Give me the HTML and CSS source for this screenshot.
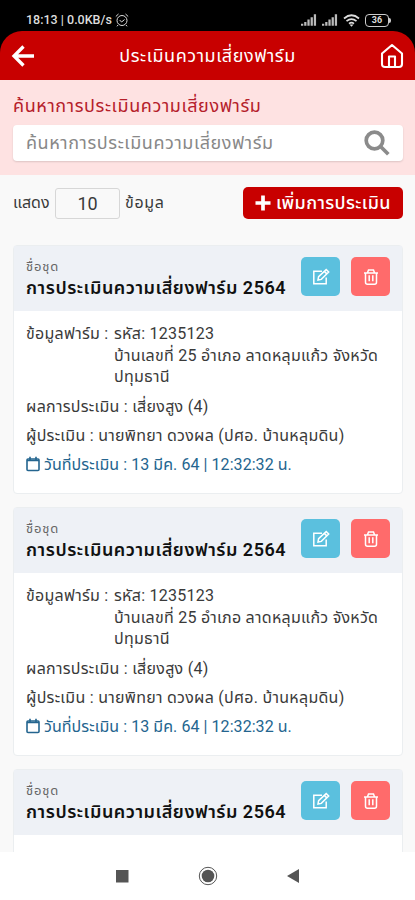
FILE: index.html
```html
<!DOCTYPE html>
<html lang="th">
<head>
<meta charset="utf-8">
<meta name="viewport" content="width=device-width">
<title>ประเมินความเสี่ยงฟาร์ม</title>
<link rel="stylesheet" href="styles.css">
</head>
<body>
<svg class="symbols" aria-hidden="true">
  <symbol id="edit" viewBox="0 0 18 18"><path d="M10 3.200H1.800v12.500h12.400V9.500" /><path d="M6 12l.6-3.300L14.200 1.600l2.500 2.400-7.400 7.400zM12.300 3.400l2.500 2.500" /></symbol>
  <symbol id="trash" viewBox="0 0 18 18"><path d="M2 5h14M5.500 4.700l1-2.700h5l1 2.700M3.500 5v9.200q0 2 2 2h7q2 0 2-2V5M7.200 7.300v6M10.800 7.300v6" /></symbol>
  <symbol id="calendar" viewBox="0 0 14 16"><rect x="1" y="3" width="12" height="11.5" rx="1" /><path d="M1 4.500h12M4 .8V4M10 .8V4" /></symbol>
  <symbol id="signal" viewBox="0 0 17 12"><path d="M0 10h2.400v2H0zM3.400 8h2.400v4H3.400zM6.800 5.500h2.400V12H6.800zM10.200 3h2.400v9h-2.400zM13.600 0H16v12h-2.400z" /></symbol>
</svg>
<div class="phone">
  <div class="status">
    <span class="clock">18:13 | 0.0KB/s</span>
    <svg class="alarm" viewBox="0 0 14 14"><circle cx="7" cy="7.500" r="5" /><path d="M.8 3.500L3.500 1M13.200 3.500L10.500 1M4.600 7l2 2 3-2.500M3 12l-1 1.300M11 12l1 1.300" /></svg>
    <div class="indicators">
      <svg class="signal"><use href="#signal" /></svg>
      <svg class="signal"><use href="#signal" /></svg>
      <svg class="wifi" viewBox="0 0 17 13"><path d="M1 4.500q7.500-6.500 15 0M3.500 7.200q5-4.300 10 0M6 9.700q2.500-2 5 0" /><path class="dot" d="M6.500 10.500h4l-2 2.300z" /></svg>
      <div class="power"><div class="battery">36</div><div class="nub"></div></div>
    </div>
  </div>
  <header class="appbar">
    <svg class="back" viewBox="0 0 24 24"><path d="M12.500 2.500L3 12l9.500 9.500M3.500 12H23" /></svg>
    <h1>ประเมินความเสี่ยงฟาร์ม</h1>
    <svg class="home" viewBox="0 0 24 26"><path d="M2 10.500L12 2l10 8.500V21q0 3-3 3H5q-3 0-3-3zM9 24V13.500h6V24" /></svg>
  </header>
  <section class="search">
    <h2>ค้นหาการประเมินความเสี่ยงฟาร์ม</h2>
    <div class="searchbox">
      <span class="placeholder">ค้นหาการประเมินความเสี่ยงฟาร์ม</span>
      <svg class="lens" viewBox="0 0 26 26"><circle cx="10.500" cy="10.500" r="8.300" /><path d="M16.800 16.800l7.500 7.500" /></svg>
    </div>
  </section>
  <main class="content">
    <div class="toolbar">
      <span class="small show">แสดง</span>
      <span class="count">10</span>
      <span class="small unit">ข้อมูล</span>
      <div class="add"><svg viewBox="0 0 16 16"><path d="M8 .5v15M.5 8h15" /></svg><span>เพิ่มการประเมิน</span></div>
    </div>
    <article class="card">
      <div class="card-head">
        <div class="heading"><div class="label">ชื่อชุด</div><div class="name">การประเมินความเสี่ยงฟาร์ม 2564</div></div>
        <div class="btn edit"><svg><use href="#edit" /></svg></div>
        <div class="btn delete"><svg><use href="#trash" /></svg></div>
      </div>
      <div class="card-body">
        <div class="farm"><span class="key">ข้อมูลฟาร์ม :</span><div class="address"><div>รหัส: 1235123</div><div>บ้านเลขที่ 25 อำเภอ ลาดหลุมแก้ว จังหวัด</div><div>ปทุมธานี</div></div></div>
        <div class="line result">ผลการประเมิน : เสี่ยงสูง (4)</div>
        <div class="line">ผู้ประเมิน : นายพิทยา ดวงผล (ปศอ. บ้านหลุมดิน)</div>
        <div class="line date"><svg><use href="#calendar" /></svg><span>วันที่ประเมิน : 13 มีค. 64 | 12:32:32 น.</span></div>
      </div>
    </article>
    <article class="card">
      <div class="card-head">
        <div class="heading"><div class="label">ชื่อชุด</div><div class="name">การประเมินความเสี่ยงฟาร์ม 2564</div></div>
        <div class="btn edit"><svg><use href="#edit" /></svg></div>
        <div class="btn delete"><svg><use href="#trash" /></svg></div>
      </div>
      <div class="card-body">
        <div class="farm"><span class="key">ข้อมูลฟาร์ม :</span><div class="address"><div>รหัส: 1235123</div><div>บ้านเลขที่ 25 อำเภอ ลาดหลุมแก้ว จังหวัด</div><div>ปทุมธานี</div></div></div>
        <div class="line result">ผลการประเมิน : เสี่ยงสูง (4)</div>
        <div class="line">ผู้ประเมิน : นายพิทยา ดวงผล (ปศอ. บ้านหลุมดิน)</div>
        <div class="line date"><svg><use href="#calendar" /></svg><span>วันที่ประเมิน : 13 มีค. 64 | 12:32:32 น.</span></div>
      </div>
    </article>
    <article class="card">
      <div class="card-head">
        <div class="heading"><div class="label">ชื่อชุด</div><div class="name">การประเมินความเสี่ยงฟาร์ม 2564</div></div>
        <div class="btn edit"><svg><use href="#edit" /></svg></div>
        <div class="btn delete"><svg><use href="#trash" /></svg></div>
      </div>
      <div class="card-body"></div>
    </article>
  </main>
  <nav class="navbar">
    <svg viewBox="0 0 20 20"><path d="M4 4h12.500v12.500H4z" /></svg>
    <svg viewBox="0 0 20 20"><circle cx="10" cy="10" r="6.300" /><circle class="ring" cx="10" cy="10" r="8.700" /></svg>
    <svg viewBox="0 0 20 20"><path d="M3 10l12-7v14z" /></svg>
  </nav>
</div>
</body>
</html>
```
FILE: styles.css
```css
* { box-sizing: border-box; }
body { margin: 0; background: #000; font-family: Roboto, "Noto Sans Thai", "Noto Sans", sans-serif; color: #3a3a3a; }
h1, h2 { margin: 0; font-weight: 400; }
svg { display: block; flex: none; fill: none; stroke: currentColor; }
.symbols { position: absolute; width: 0; height: 0; }
.phone { width: 415px; height: 900px; overflow: hidden; display: flex; flex-direction: column; white-space: nowrap; }
.status { height: 31px; flex: none; padding: 9px 24px 0 26px; display: flex; align-items: center; color: #ddd; }
.clock { font-size: 12.5px; font-weight: 500; line-height: 20px; }
.alarm { width: 14px; height: 14px; margin-left: 3px; }
.indicators { margin-left: auto; display: flex; align-items: center; gap: 5px; }
.signal { width: 16px; height: 12px; fill: #bbb; stroke: none; }
.wifi { width: 17px; height: 13px; stroke-width: 1.7; }
.dot { fill: #ddd; stroke: none; }
.power { display: flex; align-items: center; }
.battery { width: 24px; height: 13px; border: 1.500px solid #ccc; border-radius: 4px; font: 700 9px/11px Roboto, sans-serif; text-align: center; }
.nub { width: 2px; height: 5px; background: #ccc; border-radius: 0 2px 2px 0; }
.appbar { height: 49px; flex: none; background: #c80000; border-radius: 22px 22px 0 0; display: flex; align-items: center; padding: 0 11px; color: #fff; }
.back { width: 24px; height: 24px; stroke-width: 3.3; }
.appbar h1 { flex: 1; text-align: center; font-size: 18px; line-height: 30px; letter-spacing: .55px; }
.home { width: 24px; height: 26px; stroke-width: 2.1; stroke-linejoin: round; }
.search { height: 95px; flex: none; background: #fee2e2; padding: 11px 12px 0 13px; }
.search h2 { font-size: 18px; line-height: 30px; color: #b5202a; letter-spacing: .6px; }
.searchbox { margin-top: 4px; height: 36px; border-radius: 4px; background: #fff; box-shadow: 0 1px 2px #0002; display: flex; align-items: center; justify-content: space-between; padding: 0 13px; color: #888; }
.placeholder { font-size: 18px; line-height: 30px; letter-spacing: .57px; }
.lens { width: 26px; height: 26px; stroke: #8b8b8b; stroke-width: 3.7; }
.content { flex: 1; min-height: 0; overflow: hidden; background: #f9f9f9; padding: 12px 12px 0 13px; }
.toolbar { height: 32px; display: flex; align-items: center; margin-bottom: 26px; }
.small { font-size: 16px; line-height: 26px; }
.show { width: 42px; }
.unit { letter-spacing: .7px; }
.count { width: 65px; height: 31px; margin-right: 5px; border: 1px solid #d7d7d7; border-radius: 3px; font-size: 18px; line-height: 30px; text-align: center; }
.add { margin-left: auto; width: 160px; height: 32px; border-radius: 5px; background: #c80000; color: #fff; display: flex; align-items: center; padding-left: 12px; gap: 5px; font-size: 18px; font-weight: 500; line-height: 30px; letter-spacing: .35px; }
.add svg { width: 16px; height: 16px; stroke-width: 3.7; }
.card { height: 249px; margin-bottom: 13px; border: 1px solid #ebeef0; border-radius: 4px; background: #fff; }
.card-head { height: 65px; background: #eef1f6; display: flex; align-items: flex-start; padding: 11px 11px 0 12px; }
.heading { width: 275px; flex: none; }
.label { font-size: 13px; line-height: 20px; color: #666; letter-spacing: .85px; }
.name { font-size: 18px; font-weight: 600; line-height: 22px; color: #111; letter-spacing: .52px; }
.btn { width: 39px; height: 39px; flex: none; border-radius: 5px; display: flex; align-items: center; justify-content: center; color: #fff; }
.btn svg { width: 18px; height: 18px; stroke-width: 1.5; }
.edit { background: #5bc0de; margin-right: 11px; }
.delete { background: #ff6b6b; }
.card-body { padding: 12px 11px 0 12px; font-size: 16px; line-height: 21.5px; letter-spacing: .27px; }
.farm { display: flex; }
.key { width: 88px; flex: none; }
.line { height: 29px; line-height: 29px; }
.result { margin-top: 4px; }
.date { display: flex; align-items: center; color: #24658f; letter-spacing: .06px; }
.date svg { width: 14px; height: 16px; margin-right: 4px; stroke-width: 1.6; }
.navbar { height: 48px; flex: none; background: #fff; display: flex; justify-content: center; align-items: center; gap: 66px; color: #555; }
.navbar svg { width: 20px; height: 20px; fill: currentColor; stroke: none; }
.navbar .ring { fill: none; stroke: currentColor; stroke-width: 1; }
```
